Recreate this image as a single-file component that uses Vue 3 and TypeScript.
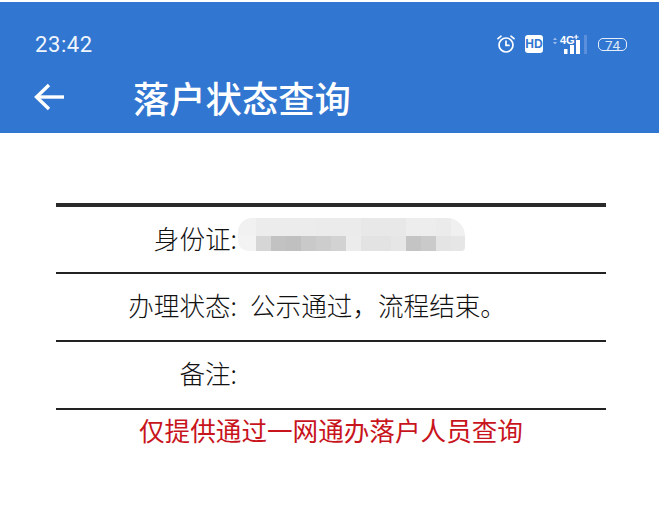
<script setup lang="ts">
const statusText = '公示通过\uFF0C流程结束。'
const topCells = ['#f1f1f1', '#ececec', '#ececec', '#ececec', '#ececec', '#ebebeb', '#ebebeb', '#ebebeb', '#e8e8e8', '#e8e8e8', '#e8e8e8', '#ededed', '#ededed', '#ebebeb', '#f0f0f0']
const bottomCells = ['#f3f3f3', '#d6d6d6', '#c2c2c2', '#c0c0c0', '#c9c9c9', '#cdcdcd', '#d2d2d2', '#ececec', '#e3e3e3', '#e3e3e3', '#e6e6e6', '#c4c4c4', '#cacaca', '#e4e4e4', '#e6e6e6']
</script>

<template>
  <div class="page">
    <header class="appbar">
      <div class="status">
        <span class="time">23:42</span>
        <div class="status-icons">
          <svg class="alarm" width="20" height="20" viewBox="0 0 20 20" fill="none" stroke="#fff" stroke-width="1.7" stroke-linecap="round">
            <circle cx="10" cy="11" r="7" />
            <path d="M10 7.2V11.4H13" />
            <path d="M2 4.6 5 2.2M18 4.6 15 2.2" />
          </svg>
          <span class="hd">HD</span>
          <svg class="signal" width="35" height="21" viewBox="0 0 35 21">
            <path d="M0 6 2 3.5 4 6ZM0 8 2 10.5 4 8Z" fill="#9dbcec" />
            <text x="7" y="10" class="net">4G</text>
            <path d="M21 3H25.5M23.2 .8V5.2" stroke="#fff" stroke-width="1.2" />
            <rect x="11" y="15" width="3.5" height="5" fill="#fff" />
            <rect x="17" y="11" width="4" height="9" fill="#fff" />
            <rect x="23" y="6" width="4" height="14" fill="#fff" />
            <rect x="31" y="1" width="3" height="19" fill="#5b8fdc" />
          </svg>
          <span class="battery">74</span>
        </div>
      </div>
      <div class="titlebar">
        <svg class="back" width="32" height="30" viewBox="0 0 32 30" fill="none" stroke="#fff" stroke-width="3.4">
          <path d="M31 15H4" />
          <path d="M16 3 3.5 15 16 27" />
        </svg>
        <h1>落户状态查询</h1>
      </div>
    </header>

    <main class="content">
      <section class="table">
        <div class="row first">
          <span class="label">身份证:</span>
          <div class="mosaic">
            <i v-for="(c, i) in topCells" :key="'t' + i" :style="{ background: c }" />
            <i v-for="(c, i) in bottomCells" :key="'b' + i" :style="{ background: c }" />
          </div>
        </div>
        <div class="row">
          <span class="label">办理状态:</span>
          <span class="value">{{ statusText }}</span>
        </div>
        <div class="row">
          <span class="label">备注:</span>
        </div>
      </section>
      <p class="notice">仅提供通过一网通办落户人员查询</p>
    </main>
  </div>
</template>

<style scoped>
.page {
  width: 659px;
  height: 526px;
  padding-top: 2px;
  box-sizing: border-box;
  background: #fff;
  overflow: hidden;
  font-family: "Noto Sans CJK SC", "Noto Sans", sans-serif;
}
.appbar {
  height: 131px;
  background: #3176d1;
  color: #fff;
  padding: 27px 32px 0 35px;
  box-sizing: border-box;
}
.status {
  display: flex;
  justify-content: space-between;
  align-items: center;
  height: 30px;
}
.time {
  font-family: Roboto, sans-serif;
  font-size: 22px;
  letter-spacing: 0.6px;
  color: #f0f5fc;
}
.status-icons {
  display: flex;
  align-items: center;
  height: 24px;
}
.alarm {
  margin-right: 9px;
}
.hd {
  width: 18px;
  height: 18px;
  border-radius: 3px;
  background: #fff;
  color: #3176d1;
  font: 700 12px/18px "Liberation Sans", sans-serif;
  text-align: center;
  margin-right: 10px;
}
.signal {
  margin-right: 10px;
}
.net {
  font: 700 11px "Liberation Sans", sans-serif;
  fill: #fff;
}
.battery {
  width: 27px;
  height: 11px;
  border: 1.5px solid #e6eefa;
  border-radius: 5px;
  font: 400 13.5px/12px Roboto, sans-serif;
  text-align: center;
  color: #dbe6f7;
}
.titlebar {
  display: flex;
  align-items: center;
  gap: 68px;
  margin-top: 13px;
}
.back {
  margin-left: -2px;
}
h1 {
  margin: 0;
  font-size: 36.3px;
  font-weight: 500;
  line-height: 50px;
}
.content {
  padding: 70px 53px 0 56px;
}
.table {
  border-top: 4px solid #2a2a2a;
  border-bottom: 2px solid #222;
  color: #111;
  font-weight: 300;
}
.row {
  display: flex;
  align-items: center;
  height: 66px;
  font-size: 25.6px;
  border-top: 2px solid #222;
}
.row.first {
  height: 65px;
  border-top: 0;
}
.label {
  width: 181px;
  text-align: right;
  flex: none;
  margin-bottom: 5px;
}
.value {
  margin: 0 0 5px 13px;
}
.mosaic {
  display: grid;
  grid-template-columns: 18px repeat(13, 15px) 14px;
  grid-template-rows: 18px 15px;
  width: 227px;
  margin: 0 0 10px 1px;
  border-radius: 14px 18px 4px 10px;
  overflow: hidden;
  filter: blur(0.5px);
}
.notice {
  margin: 0;
  padding-left: 83px;
  font-size: 25.6px;
  line-height: 40px;
  color: #c8141c;
}
</style>

<style>
body {
  background: #fff;
}
</style>
